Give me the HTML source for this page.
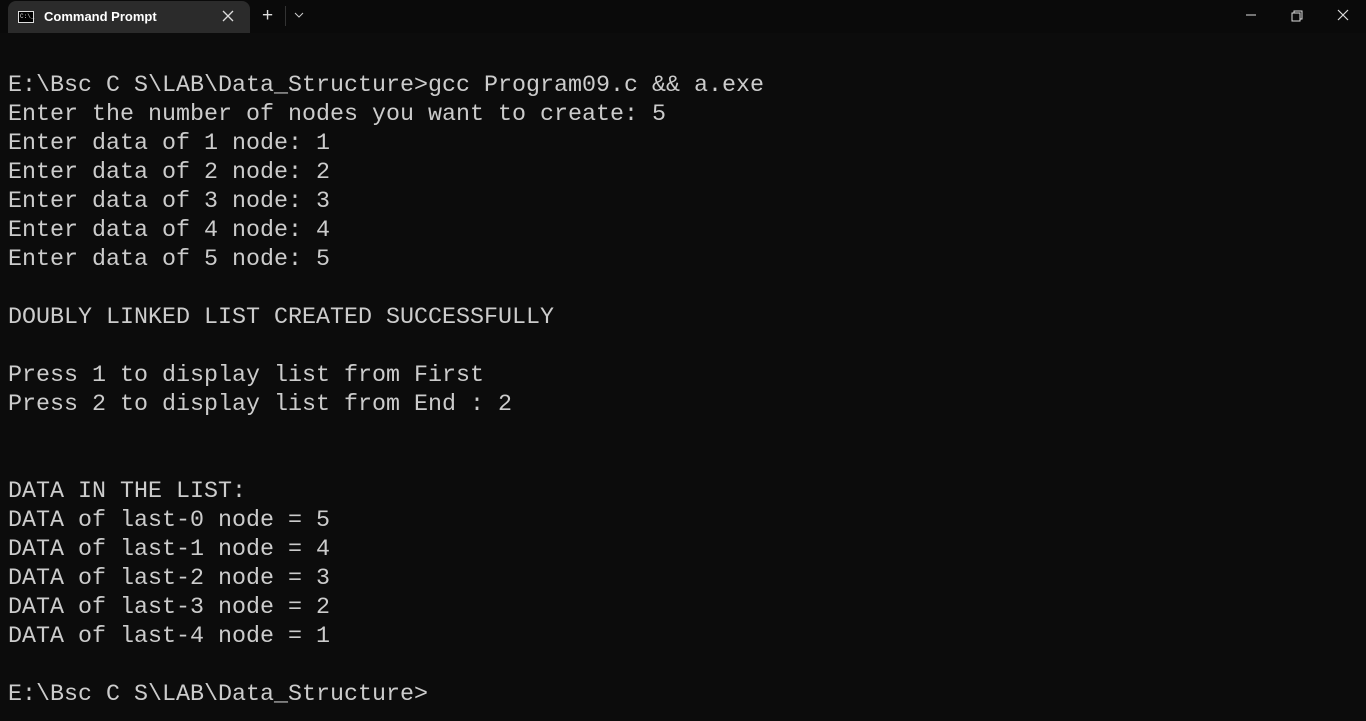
<!DOCTYPE html>
<html><head><meta charset="utf-8"><style>
html,body{margin:0;padding:0;background:#0c0c0c;width:1366px;height:721px;overflow:hidden}
.bar{position:absolute;left:0;top:0;width:1366px;height:33px;background:#0a0a0a}
.tab{position:absolute;left:8px;top:1px;width:242px;height:32px;background:#2b2b2b;border-radius:8px 8px 0 0}
.tab .t{position:absolute;left:36px;top:8px;font:600 13px "Liberation Sans",sans-serif;color:#fff}
.ic{position:absolute;left:10px;top:10px;width:14px;height:10px;border:1px solid #ddd;background:#000}
.ic i{position:absolute;left:1px;top:1px;font:6px "Liberation Mono",monospace;color:#ddd;font-style:normal}
pre{position:absolute;left:8px;top:72px;margin:0;font:23.33px/29px "Liberation Mono",monospace;color:#cccccc}
.w{position:absolute;color:#ddd;font-family:"Liberation Sans",sans-serif}
</style></head><body>
<div class="bar"></div>
<div class="tab"><div class="ic"><i>C:\_</i></div><div class="t">Command Prompt</div>
<svg style="position:absolute;left:214px;top:9px" width="12" height="12"><path d="M1 1L11 11M11 1L1 11" stroke="#ddd" stroke-width="1.3"/></svg></div>
<div class="w" style="left:262px;top:5px;font-size:19px">+</div>
<div style="position:absolute;left:285px;top:6px;width:1px;height:20px;background:#333"></div>
<svg style="position:absolute;left:294px;top:12px" width="10" height="6"><path d="M1 1L5 5L9 1" stroke="#ccc" fill="none"/></svg>
<svg style="position:absolute;left:1240px;top:8px" width="120" height="16">
<path d="M6 7H16" stroke="#ddd" stroke-width="1"/>
<rect x="52" y="5" width="8" height="8" fill="none" stroke="#ddd"/><path d="M54 5V3H62V11H60" fill="none" stroke="#ddd"/>
<path d="M98 2L108 12M108 2L98 12" stroke="#ddd" stroke-width="1.2"/>
</svg>
<pre>E:\Bsc C S\LAB\Data_Structure&gt;gcc Program09.c &amp;&amp; a.exe
Enter the number of nodes you want to create: 5
Enter data of 1 node: 1
Enter data of 2 node: 2
Enter data of 3 node: 3
Enter data of 4 node: 4
Enter data of 5 node: 5

DOUBLY LINKED LIST CREATED SUCCESSFULLY

Press 1 to display list from First
Press 2 to display list from End : 2


DATA IN THE LIST:
DATA of last-0 node = 5
DATA of last-1 node = 4
DATA of last-2 node = 3
DATA of last-3 node = 2
DATA of last-4 node = 1

E:\Bsc C S\LAB\Data_Structure&gt;</pre>
</body></html>
